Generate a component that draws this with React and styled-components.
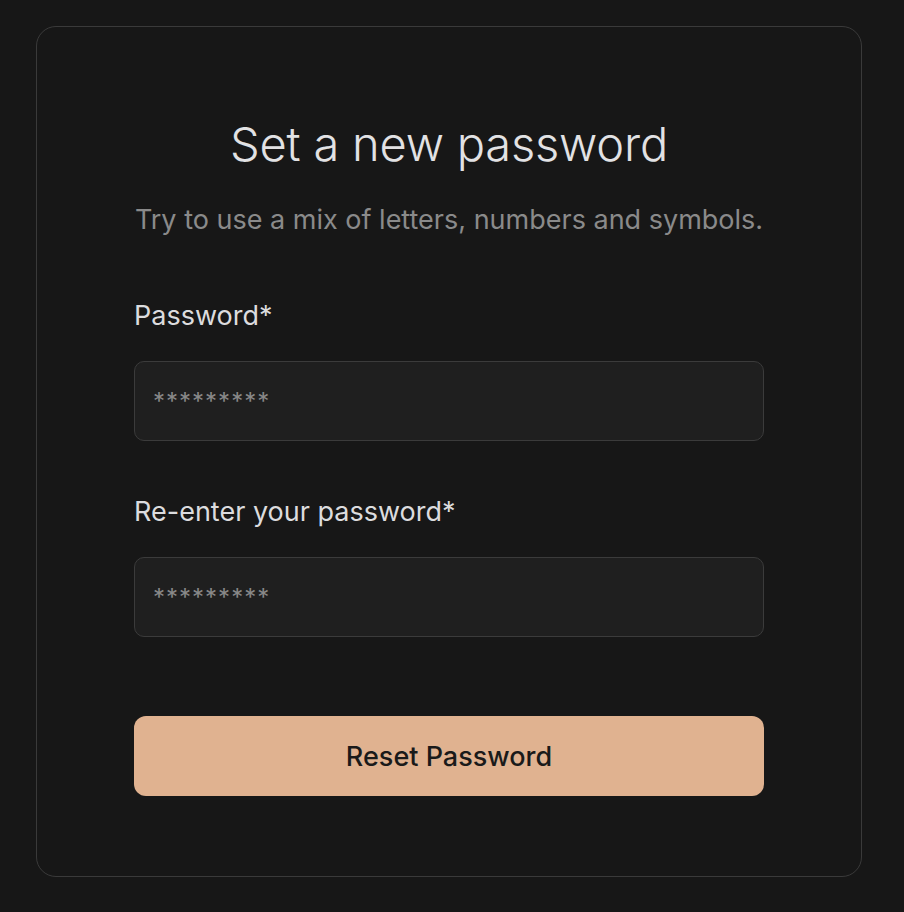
import styled, { createGlobalStyle } from "styled-components";

const Global = createGlobalStyle`
  * { box-sizing: border-box; }
  body {
    margin: 0;
    background: #171717;
    font-family: Inter, "Noto Sans", sans-serif;
  }
`

const Page = styled.div`
  min-height: 912px;
  padding: 26px 42px 35px 36px;
`

const Card = styled.div`
  border: 1px solid #3a3a3a;
  border-radius: 20px;
  padding: 89px 97px 80px;
  display: flex;
  flex-direction: column;
  align-items: center;
`

const Title = styled.h1`
  margin: 0;
  font-size: 47px;
  font-weight: 300;
  line-height: 56px;
  color: #e2e2e4;
  letter-spacing: -0.2px;
`

const Subtitle = styled.p`
  margin: 32px 0 0;
  font-size: 27px;
  line-height: 32px;
  color: #8a8a8a;
`

const Form = styled.form`
  width: 630px;
  margin-top: 64px;
  display: flex;
  flex-direction: column;
`

const Field = styled.div`
  display: flex;
  flex-direction: column;
  gap: 29px;
  margin-bottom: ${props => props.last ? '79px' : '55px'};
`

const Label = styled.label`
  font-size: 27px;
  line-height: 32px;
  color: #dcdcde;
`

const Input = styled.input`
  height: 80px;
  border: 1px solid #3b3b3b;
  border-radius: 10px;
  background: #1f1f1f;
  padding: 0 18px;
  font-family: inherit;
  font-size: 24px;
  color: #ddd;
  outline: none;
  &::placeholder {
    color: #888;
    letter-spacing: 1px;
  }
`

const Button = styled.button`
  height: 80px;
  border: none;
  border-radius: 12px;
  background: #e0b290;
  color: #1a1a1a;
  font-family: inherit;
  font-size: 27px;
  font-weight: 500;
  cursor: pointer;
`

export default function App() {
  return (
    <Page>
      <Global />
      <Card>
        <Title>Set a new password</Title>
        <Subtitle>Try to use a mix of letters, numbers and symbols.</Subtitle>
        <Form onSubmit={e => e.preventDefault()}>
          <Field>
            <Label htmlFor="pw">Password*</Label>
            <Input id="pw" type="password" placeholder="*********" />
          </Field>
          <Field last>
            <Label htmlFor="pw2">Re-enter your password*</Label>
            <Input id="pw2" type="password" placeholder="*********" />
          </Field>
          <Button type="submit">Reset Password</Button>
        </Form>
      </Card>
    </Page>
  )
}
